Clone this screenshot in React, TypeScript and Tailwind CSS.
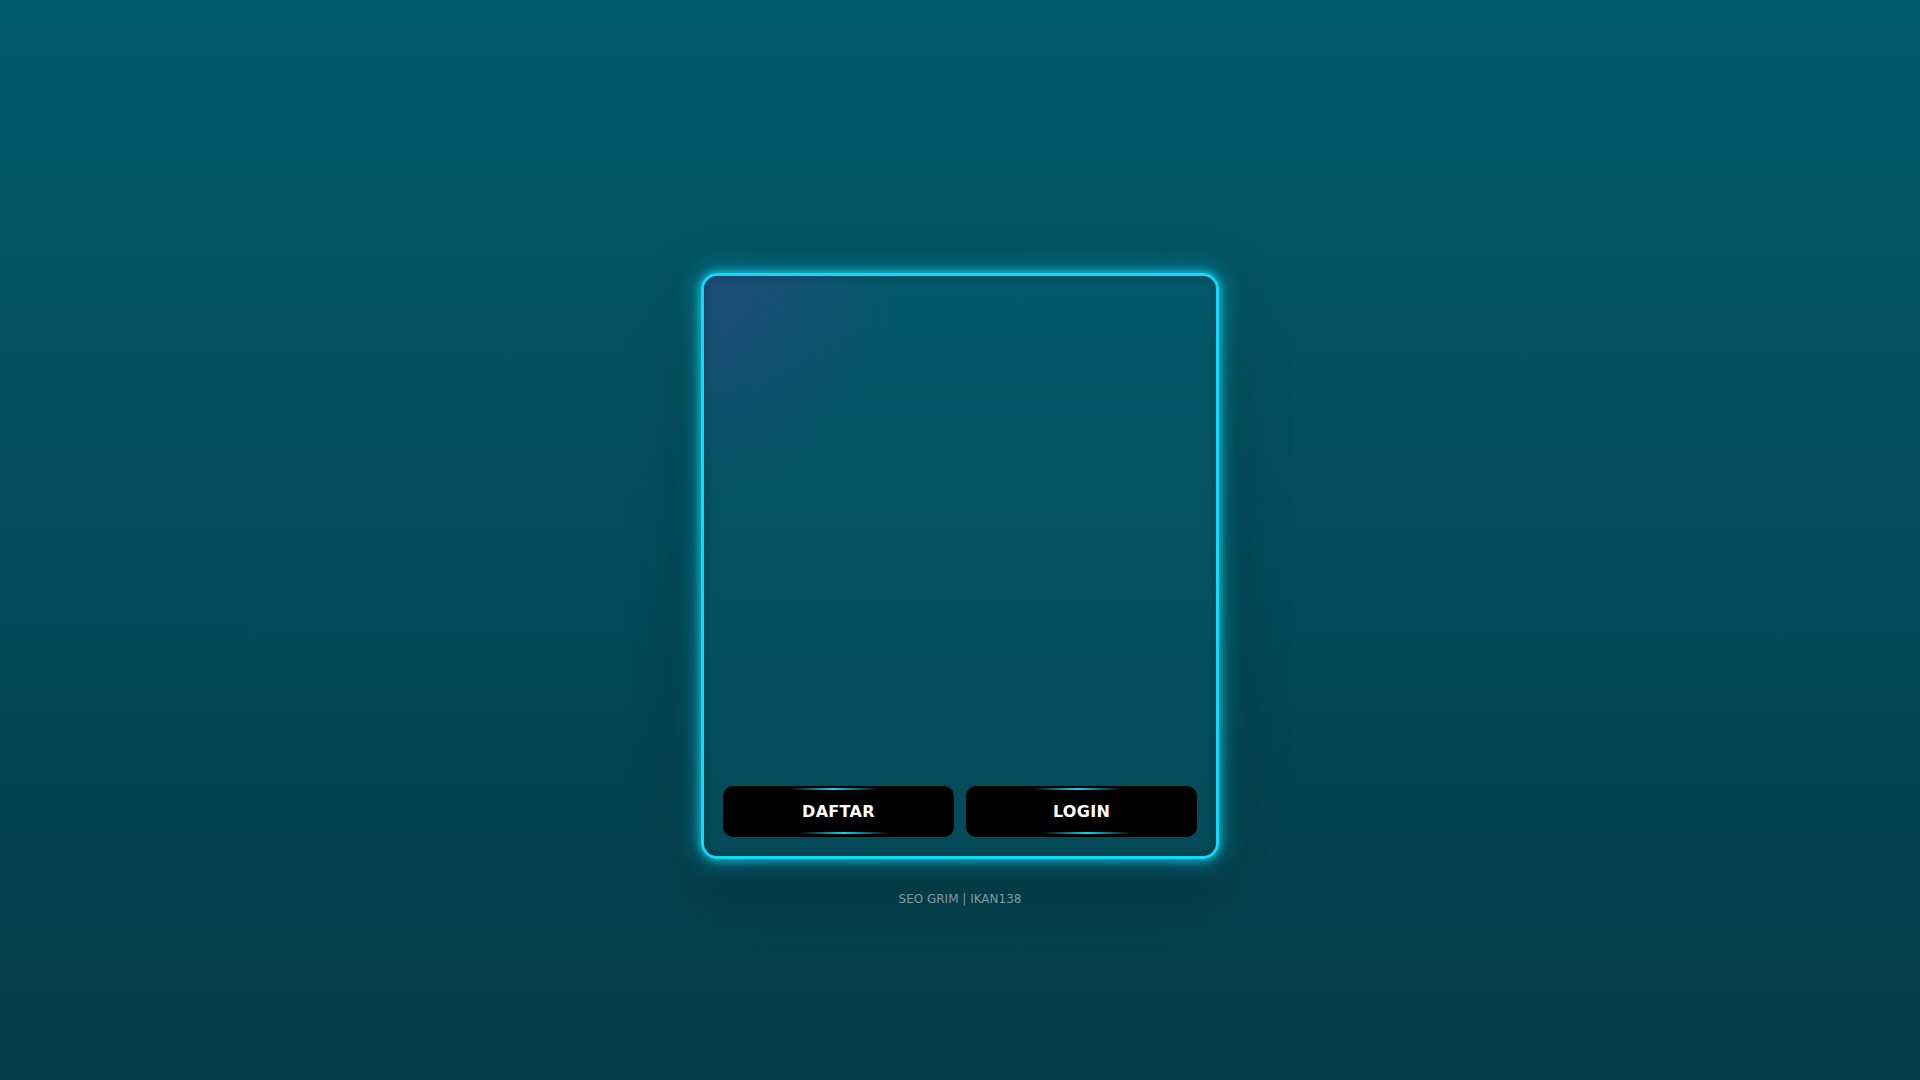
import React from 'react';

const GlowButton = ({ label }: { label: string }) => (
    <button className="relative h-[51px] flex-1 rounded-[10px] bg-black text-white font-bold text-[16px] tracking-[0.3px] font-['DejaVu_Sans',sans-serif] overflow-hidden">
        {/* top + bottom light strips */}
        <span className="absolute top-[2px] left-[66px] w-[90px] h-[2px] bg-gradient-to-r from-transparent via-[#12d6f5] to-transparent" />
        <span className="absolute bottom-[3px] left-[76px] w-[90px] h-[2px] bg-gradient-to-r from-transparent via-[#12d6f5] to-transparent" />
        <span className="relative">{label}</span>
    </button>
);

export default function App() {
    return (
        <div className="min-h-[1080px] w-full bg-gradient-to-b from-[#035b6d] to-[#043c48] flex flex-col items-center pt-[273px] font-['DejaVu_Sans',sans-serif]">
            {/* Card */}
            <div className="relative w-[518px] h-[586px] rounded-[16px] border-[3px] border-[#14d8f7] shadow-[0_0_8px_1px_rgba(20,216,247,0.8),0_0_24px_4px_rgba(20,216,247,0.4),0_20px_70px_rgba(0,0,0,0.28)] bg-gradient-to-b from-[#05596c] to-[#044a58] overflow-hidden flex flex-col justify-end px-[19px] pb-[19px]">
                <div className="absolute inset-0 bg-[radial-gradient(ellipse_at_top_left,rgba(70,60,140,0.42),transparent_26%)]" />
                <div className="absolute inset-0 shadow-[inset_0_0_10px_rgba(0,0,0,0.25)] rounded-[13px]" />
                <div className="relative flex gap-[12px]">
                    <GlowButton label="DAFTAR" />
                    <GlowButton label="LOGIN" />
                </div>
            </div>

            {/* Footer */}
            <p className="mt-[31px] text-[12px] text-[#8ea7b1]">SEO GRIM | IKAN138</p>
        </div>
    );
}
